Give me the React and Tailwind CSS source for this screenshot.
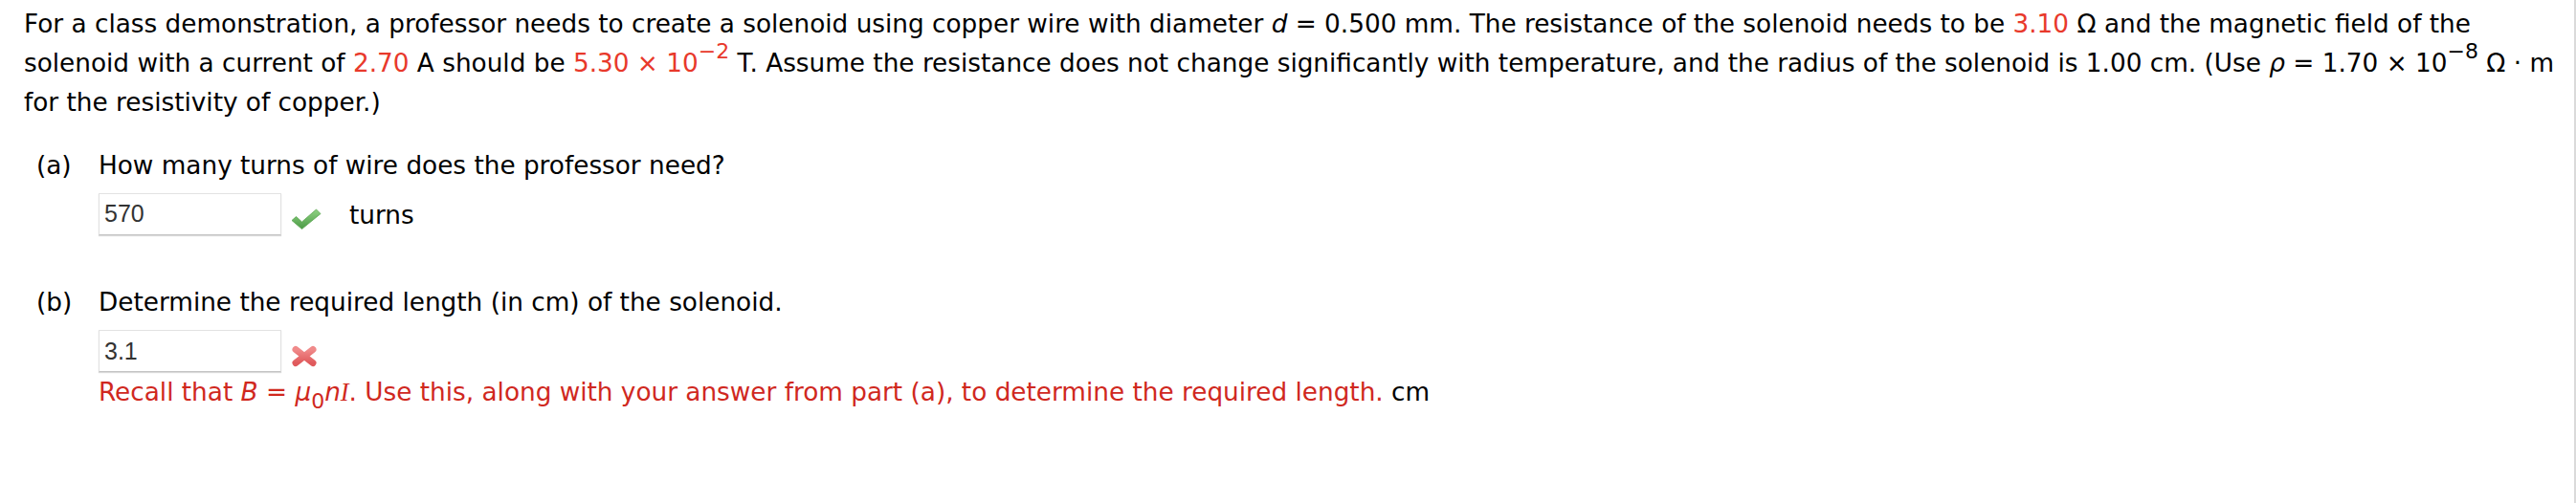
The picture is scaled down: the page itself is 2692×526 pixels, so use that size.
const red = "text-[#e8392b]";

const CheckIcon = () => (
  <svg width="32" height="22" viewBox="0 0 32 22">
    <defs>
      <linearGradient id="chk" x1="0" y1="0" x2="0" y2="1">
        <stop offset="0" stopColor="#8fd283" />
        <stop offset="1" stopColor="#4b9a45" />
      </linearGradient>
    </defs>
    <path
      d="M1 12.5 L5.5 8.5 L11.5 14 L26.5 1 L31 5.5 L11.5 21.5 Z"
      fill="url(#chk)"
      stroke="#5aa650"
      strokeWidth="0.8"
      strokeLinejoin="round"
    />
  </svg>
);

const CrossIcon = () => (
  <svg width="28" height="23" viewBox="0 0 28 23">
    <defs>
      <linearGradient id="crs" x1="0" y1="0" x2="0" y2="1">
        <stop offset="0" stopColor="#f08a8a" />
        <stop offset="1" stopColor="#e05a5c" />
      </linearGradient>
    </defs>
    <g stroke="url(#crs)" strokeWidth="7" strokeLinecap="round">
      <line x1="5" y1="4.5" x2="23" y2="18.5" />
      <line x1="23" y1="4.5" x2="5" y2="18.5" />
    </g>
  </svg>
);

const AnswerBox = ({ value }) => (
  <div className="w-[191px] h-[44px] flex items-center pl-[5px] bg-white border border-[#e2e2e2] border-b-[#c4c4c4] shadow-[0_1px_1px_rgba(0,0,0,0.15)] text-[25px] text-[#333] font-['Liberation_Sans',Arial,sans-serif]">
    {value}
  </div>
);

export default function App() {
  return (
    <div className="min-h-[526px] w-full bg-white border-r-2 border-[#dadada] text-black text-[26.3px] leading-[41px] font-['DejaVu_Sans',Verdana,sans-serif]">
      <div className="pl-[25px] pr-[15px] pt-[5px]">
        <p>
          For a class demonstration, a professor needs to create a solenoid using copper wire with
          diameter <i>d</i> = 0.500 mm. The resistance of the solenoid needs to be{" "}
          <span className={red}>3.10</span> Ω and the magnetic field of the solenoid with a current
          of <span className={red}>2.70</span> A should be{" "}
          <span className={red}>
            5.30 × 10<sup className="text-[22px] top-[-0.62em]">−2</sup>
          </span>{" "}
          T. Assume the resistance does not change significantly with temperature, and the radius of
          the solenoid is 1.00 cm. (Use <i>ρ</i> = 1.70 × 10
          <sup className="text-[22px] top-[-0.62em]">−8</sup> Ω · m for the resistivity of copper.)
        </p>

        <div className="mt-[25px] pl-[13px]">
          <div className="flex">
            <span className="w-[65px] shrink-0">(a)</span>
            <span>How many turns of wire does the professor need?</span>
          </div>
          <div className="flex items-center mt-[7px] ml-[65px]">
            <AnswerBox value="570" />
            <span className="ml-[10px] mt-[10px] flex">
              <CheckIcon />
            </span>
            <span className="ml-[29px] mt-[4px]">turns</span>
          </div>

          <div className="flex mt-[50px]">
            <span className="w-[65px] shrink-0">(b)</span>
            <span>Determine the required length (in cm) of the solenoid.</span>
          </div>
          <div className="flex items-center mt-[8px] ml-[65px]">
            <AnswerBox value="3.1" />
            <span className="ml-[10px] mt-[11px] flex">
              <CrossIcon />
            </span>
          </div>
          <div className="mt-[1px] ml-[65px]">
            <span className="text-[#d0281e]">
              Recall that <i>B</i> = <i>μ</i>
              <sub className="text-[22px] bottom-[-0.35em]">0</sub>
              <i>n</i>
              <i className="font-['Liberation_Serif',serif]">I</i>. Use this, along with your answer
              from part (a), to determine the required length.
            </span>{" "}
            cm
          </div>
        </div>
      </div>
    </div>
  );
}
